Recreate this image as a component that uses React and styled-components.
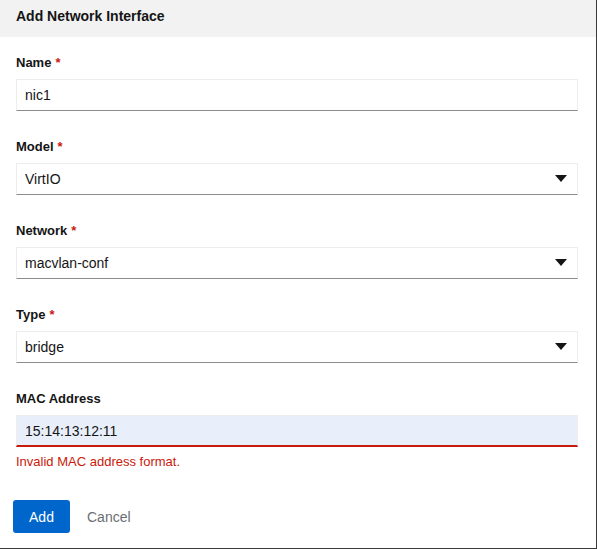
import React from "react";
import styled, { createGlobalStyle } from "styled-components";

const GlobalStyle = createGlobalStyle`
  html, body {
    margin: 0;
    padding: 0;
    background: #3a3a3a;
  }
  body {
    font-family: "Liberation Sans", Arial, sans-serif;
    color: #151515;
  }
`;

const Modal = styled.div`
  width: 596px;
  height: 548px;
  background: #fff;
  display: flex;
  flex-direction: column;
`;

const Header = styled.div`
  height: 37px;
  background: #f2f2f2;
  display: flex;
  align-items: center;
  padding-left: 16px;
  padding-bottom: 6px;
  box-sizing: border-box;
`;

const Title = styled.h1`
  margin: 0;
  font-size: 14px;
  font-weight: 700;
  color: #151515;
`;

const Form = styled.form`
  display: flex;
  flex-direction: column;
  padding: 15px 18px 0 16px;
  gap: 25px;
`;

const Field = styled.div`
  display: flex;
  flex-direction: column;
`;

const Label = styled.label`
  height: 20px;
  line-height: 21px;
  font-size: 13px;
  font-weight: 700;
  margin-bottom: 7px;
`;

const Required = styled.span`
  color: #c9190b;
  margin-left: 4px;
`;

const InputBox = styled.div`
  position: relative;
  height: 32px;
  box-sizing: border-box;
  border: 1px solid #ededed;
  border-bottom: ${({ $invalid }) => ($invalid ? "2px solid #c9190b" : "1px solid #8a8d90")};
  background: ${({ $filled }) => ($filled ? "#e8effb" : "#fff")};
  display: flex;
  align-items: center;
  padding: 0 8px;
  font-size: 14px;
  color: #151515;
`;

const Caret = styled.svg`
  position: absolute;
  right: 10px;
  top: 50%;
  transform: translateY(-50%);
`;

const ErrorText = styled.div`
  margin-top: 6px;
  font-size: 13px;
  line-height: 18px;
  color: #c9190b;
`;

const Actions = styled.div`
  display: flex;
  align-items: center;
  gap: 17px;
  margin-top: 4px;
  margin-left: -3px;
`;

const Button = styled.button`
  height: 33px;
  padding: 0 ${({ $primary }) => ($primary ? "16px" : "0")};
  min-width: ${({ $primary }) => ($primary ? "57px" : "0")};
  border: none;
  border-radius: 3px;
  font-family: inherit;
  font-size: 14px;
  background: ${({ $primary }) => ($primary ? "#0066cc" : "transparent")};
  color: ${({ $primary }) => ($primary ? "#fff" : "#6a6e73")};
`;

const CaretIcon = () => (
  <Caret width="12" height="8" viewBox="0 0 12 8">
    <path d="M0 0 H12 L6 7 Z" fill="#151515" />
  </Caret>
);

const TextField = ({ label, required, value, select, invalid, filled, error }) => (
  <Field>
    <Label>
      {label}
      {required && <Required>*</Required>}
    </Label>
    <InputBox $invalid={invalid} $filled={filled}>
      {value}
      {select && <CaretIcon />}
    </InputBox>
    {error && <ErrorText>{error}</ErrorText>}
  </Field>
);

export default function App() {
  return (
    <>
      <GlobalStyle />
      <Modal>
        <Header>
          <Title>Add Network Interface</Title>
        </Header>
        <Form>
          <TextField label="Name" required value="nic1" />
          <TextField label="Model" required value="VirtIO" select />
          <TextField label="Network" required value="macvlan-conf" select />
          <TextField label="Type" required value="bridge" select />
          <TextField
            label="MAC Address"
            value="15:14:13:12:11"
            invalid
            filled
            error="Invalid MAC address format."
          />
          <Actions>
            <Button type="button" $primary>Add</Button>
            <Button type="button">Cancel</Button>
          </Actions>
        </Form>
      </Modal>
    </>
  );
}
